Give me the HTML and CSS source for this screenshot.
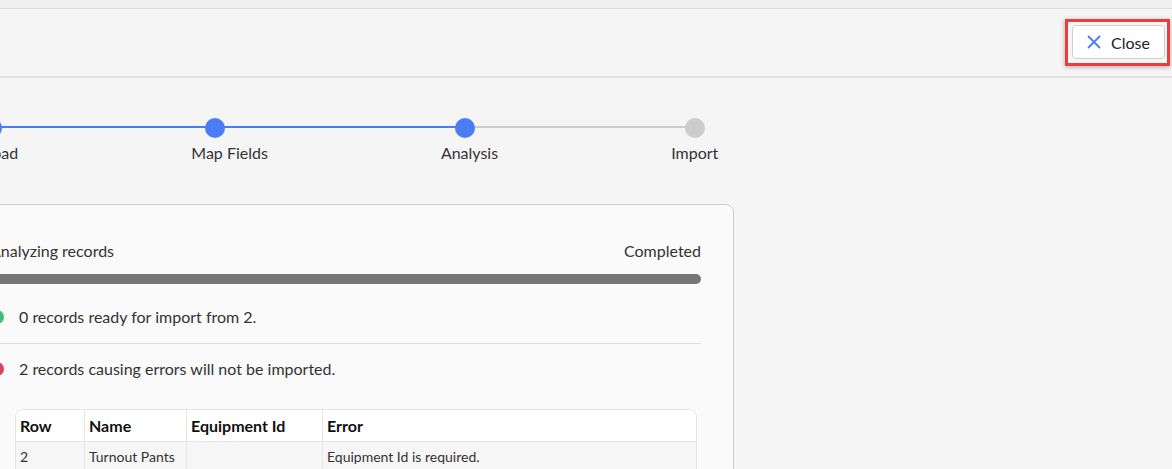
FILE: index.html
```html
<!DOCTYPE html>
<html>

<head>
    <title>Import Wizard</title>
    <link rel="stylesheet" href="styles.css">
</head>

<body>
    <div class="topStrip"></div>
    <div class="toolbar">
        <div class="focusRing">
            <button class="closeBtn" type="button">
                <svg class="closeIcon" width="14" height="14" viewBox="0 0 14 14">
                    <path d="M1 1 L13 13 M13 1 L1 13" stroke="#4a7cf6" stroke-width="1.8" fill="none" />
                </svg>
                <span>Close</span>
            </button>
        </div>
    </div>

    <div class="content">
        <div class="stepper">
            <div class="track trackDone"></div>
            <div class="track trackTodo"></div>
            <div class="step done">
                <div class="dot"></div>
                <div class="label">Upload</div>
            </div>
            <div class="step done">
                <div class="dot"></div>
                <div class="label">Map Fields</div>
            </div>
            <div class="step done">
                <div class="dot"></div>
                <div class="label">Analysis</div>
            </div>
            <div class="step">
                <div class="dot"></div>
                <div class="label">Import</div>
            </div>
        </div>

        <div class="card">
            <div class="progressHead">
                <span>Analyzing records</span>
                <span>Completed</span>
            </div>
            <div class="progressBar"></div>

            <div class="status">
                <span class="statusDot ok"></span>
                <span>0 records ready for import from 2.</span>
            </div>
            <div class="divider"></div>
            <div class="status">
                <span class="statusDot bad"></span>
                <span>2 records causing errors will not be imported.</span>
            </div>

            <table class="errors">
                <thead>
                    <tr>
                        <th class="colRow">Row</th>
                        <th class="colName">Name</th>
                        <th class="colEquip">Equipment Id</th>
                        <th>Error</th>
                    </tr>
                </thead>
                <tbody>
                    <tr>
                        <td>2</td>
                        <td>Turnout Pants</td>
                        <td></td>
                        <td>Equipment Id is required.</td>
                    </tr>
                    <tr>
                        <td>3</td>
                        <td>Turnout Coat</td>
                        <td></td>
                        <td>Equipment Id is required.</td>
                    </tr>
                </tbody>
            </table>
        </div>
    </div>
</body>

</html>
```

FILE: styles.css
```css
html,
body {
    margin: 0;
    height: 100%;
    overflow: hidden;
}

body {
    font-family: Lato, "Open Sans", sans-serif;
    font-size: 16px;
    color: #333;
    background-color: #f5f5f5;
}

.topStrip {
    height: 8px;
    background-color: #f0f0f0;
    border-bottom: 1px solid #dcdcdc;
}

.toolbar {
    height: 67px;
    display: flex;
    align-items: center;
    justify-content: flex-end;
    padding-right: 2px;
    border-bottom: 2px solid #e2e2e2;
}

.focusRing {
    border: 3px solid #ee3b3d;
    padding: 3px 2px 4px 4px;
    box-shadow: 0 1px 5px rgba(0, 0, 0, 0.3);
}

.closeBtn {
    display: flex;
    align-items: center;
    gap: 10px;
    width: 93px;
    height: 34px;
    padding: 0 0 0 14px;
    border: 1px solid #cfcfcf;
    border-radius: 4px;
    background-color: #fff;
    font-family: Lato, sans-serif;
    font-size: 16px;
    color: #222;
}

.content {
    margin-left: -43px;
    width: 777px;
}

.stepper {
    position: relative;
    display: flex;
    gap: 173px;
    padding: 40px 0 0 11px;
}

.track {
    position: absolute;
    top: 48px;
    height: 2px;
}

.trackDone {
    left: 37px;
    width: 470px;
    background-color: #4a7cf6;
}

.trackTodo {
    left: 507px;
    width: 232px;
    background-color: #cccccc;
}

.step {
    position: relative;
    display: flex;
    flex-direction: column;
    align-items: flex-start;
}

.dot {
    width: 20px;
    height: 20px;
    margin-left: 14px;
    border-radius: 50%;
    background-color: #cccccc;
}

.step.done .dot {
    background-color: #4a7cf6;
}

.label {
    margin-top: 6px;
    line-height: 18px;
    color: #333;
}

.card {
    margin-top: 42px;
    padding: 37px 32px 20px 32px;
    background-color: #fafafa;
    border: 1px solid #cccccc;
    border-radius: 8px;
}

.progressHead {
    display: flex;
    justify-content: space-between;
    line-height: 18px;
}

.progressBar {
    margin-top: 14px;
    height: 10px;
    border-radius: 5px;
    background-color: #767676;
}

.status {
    display: flex;
    align-items: center;
    gap: 15px;
    height: 18px;
    line-height: 18px;
}

.progressBar + .status {
    margin-top: 24px;
}

.statusDot {
    width: 14px;
    height: 14px;
    border-radius: 50%;
}

.statusDot.ok {
    background-color: #3fbf75;
}

.statusDot.bad {
    background-color: #d9455a;
}

.divider {
    height: 1px;
    margin: 17px 0 16px;
    background-color: #dcdcdc;
}

.errors {
    margin: 31px 4px 0 25px;
    width: calc(100% - 29px);
    border-collapse: separate;
    border-spacing: 0;
    border: 1px solid #e6e6e6;
    border-radius: 8px 8px 0 0;
    overflow: hidden;
}

.errors th,
.errors td {
    text-align: left;
    padding: 0 4px;
    border-left: 1px solid #e6e6e6;
}

.errors th:first-child,
.errors td:first-child {
    border-left: none;
}

.errors th {
    height: 31px;
    font-size: 16px;
    font-weight: bold;
    color: #111;
    background-color: #fff;
    border-bottom: 1px solid #e6e6e6;
}

.errors td {
    height: 28px;
    font-size: 14px;
    color: #333;
    background-color: #f6f6f6;
    border-bottom: 1px solid #e6e6e6;
}

.colRow {
    width: 60px;
}

.colName {
    width: 93px;
}

.colEquip {
    width: 127px;
}
```
